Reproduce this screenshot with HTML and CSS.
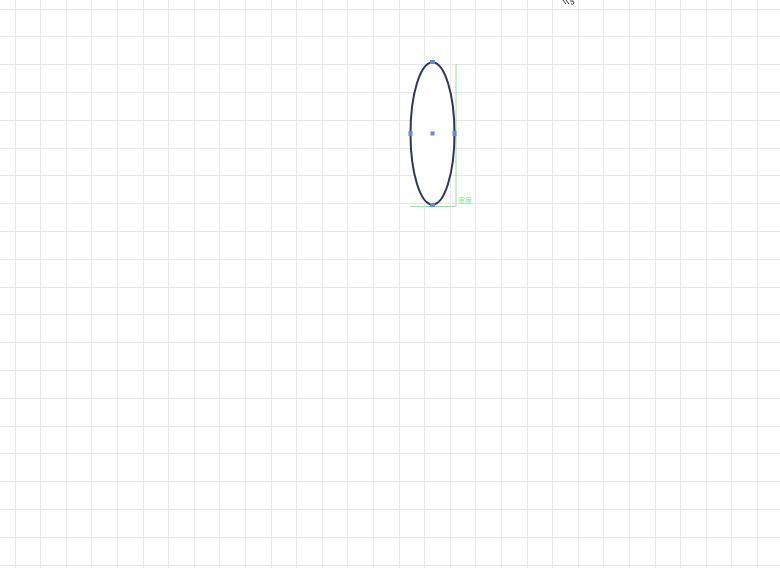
FILE: index.html
```html
<!DOCTYPE html>
<html lang="zh">
<head>
<meta charset="utf-8">
<title>Canvas</title>
<link rel="stylesheet" href="styles.css">
</head>
<body>
<div class="canvas">
  <svg class="shape" width="780" height="568" viewBox="0 0 780 568">
    <line x1="456" y1="64" x2="456" y2="206" stroke="#9be39b" stroke-width="1"/>
    <line x1="410" y1="206.5" x2="456" y2="206.5" stroke="#9be39b" stroke-width="1"/>
    <ellipse cx="432.5" cy="133.5" rx="22" ry="71" fill="#ffffff" stroke="#2e3856" stroke-width="2"/>
    <rect x="430" y="60" width="5" height="4" fill="#6a86d6"/>
    <rect x="430" y="203" width="5" height="4" fill="#6a86d6"/>
    <rect x="408.5" y="131" width="4" height="5" fill="#6a86d6"/>
    <rect x="452.5" y="131" width="4" height="5" fill="#6a86d6"/>
    <rect x="430.5" y="131.5" width="4" height="4" fill="#6a86d6"/>
    <path d="M563 0 L566 4 M566 0 L569 4 M570 1 Q574 0 574 3 Q573 5 571 4" stroke="#333" stroke-width="1" fill="none"/>
  </svg>
  <span class="dim">宽度</span>
</div>
</body>
</html>
```
FILE: styles.css
```css
html, body {
  margin: 0;
  padding: 0;
  background: #ffffff;
  overflow: hidden;
}
.canvas {
  position: relative;
  width: 780px;
  height: 568px;
  background-color: #ffffff;
  background-image:
    repeating-linear-gradient(to right, transparent 0, transparent 14.6px, #e8e8e8 14.6px, #e8e8e8 15.6px, transparent 15.6px, transparent 25.6px),
    repeating-linear-gradient(to bottom, transparent 0, transparent 8.6px, #e8e8e8 8.6px, #e8e8e8 9.6px, transparent 9.6px, transparent 27.8px);
  font-family: "Noto Sans CJK SC", "Noto Sans", sans-serif;
}
.shape {
  position: absolute;
  left: 0;
  top: 0;
}
.dim {
  position: absolute;
  left: 458px;
  top: 196px;
  font-size: 7px;
  line-height: 8px;
  color: #8fe08f;
}
```
